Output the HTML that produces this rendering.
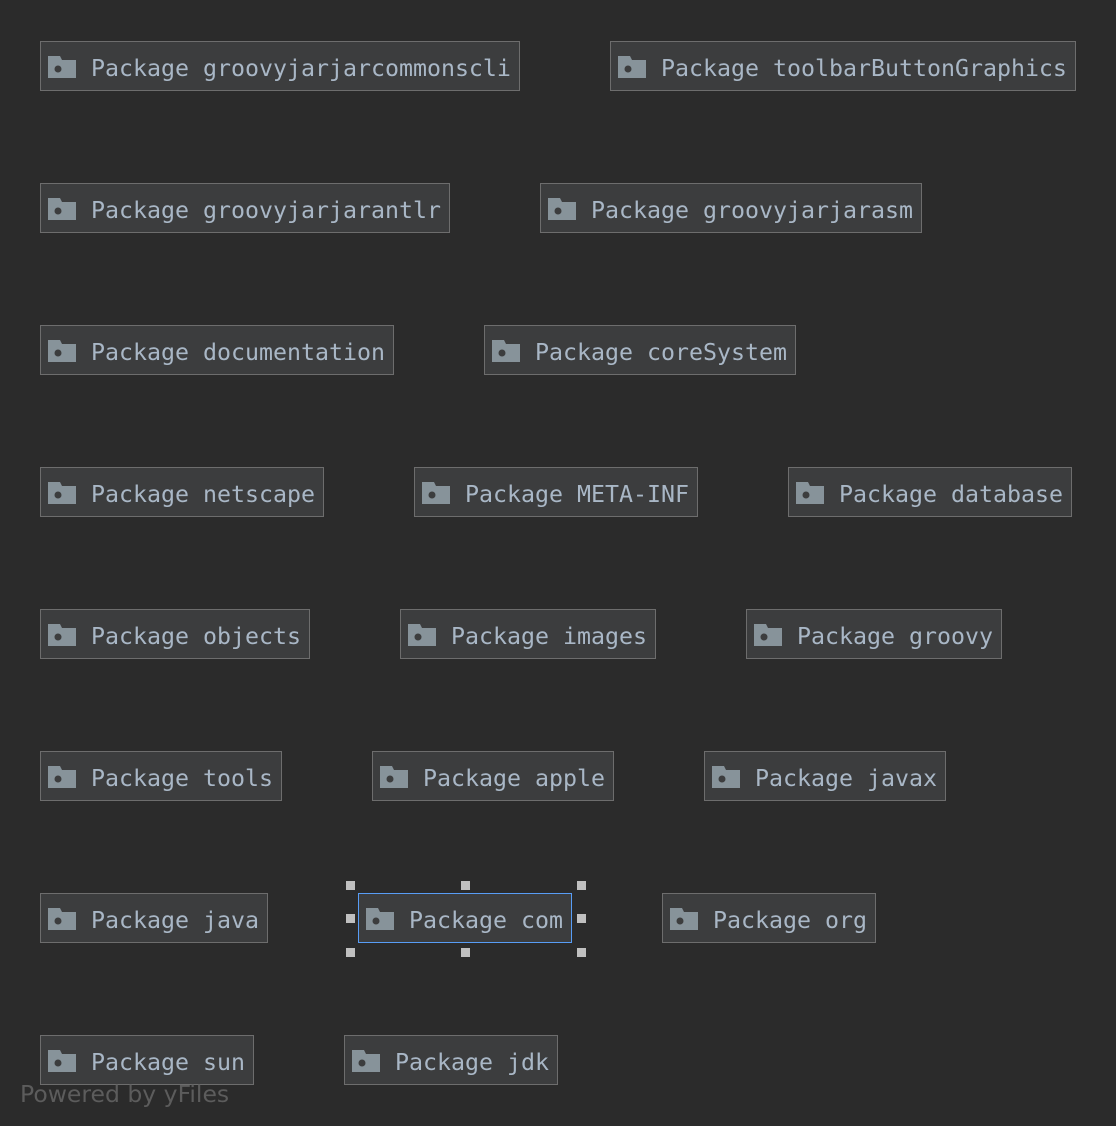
<!DOCTYPE html>
<html><head><meta charset="utf-8">
<style>
html,body{margin:0;padding:0;}
body{width:1116px;height:1126px;background:#2b2b2b;position:relative;overflow:hidden;}
.b{position:absolute;height:48px;background:#3c3d3e;border:1px solid #6d6d6d;box-sizing:content-box;}
.b svg{position:absolute;left:7px;top:14px;}
.b span{position:absolute;left:50px;top:2px;line-height:50px;font-family:"DejaVu Sans Mono","Liberation Mono",monospace;font-size:23.25px;color:#a9b7c6;white-space:pre;}
.sel{border-color:#589df6;}
.h{position:absolute;width:9px;height:9px;background:#c0c0c0;}
.pw{position:absolute;left:20px;top:1080px;font-family:"DejaVu Sans","Liberation Sans",sans-serif;font-size:23.5px;color:#5c5c5c;}
</style></head><body>
<svg width="0" height="0" style="position:absolute"><defs><symbol id="f" viewBox="0 0 28 22"><path d="M0 0H12L14 4H28V22H0Z" fill="#87939a"/><circle cx="10" cy="13" r="3.5" fill="#3c3d3e"/></symbol></defs></svg>

<div class="b" style="left:40px;top:41px;width:478px"><svg width="28" height="22"><use href="#f"/></svg><span>Package groovyjarjarcommonscli</span></div>
<div class="b" style="left:610px;top:41px;width:464px"><svg width="28" height="22"><use href="#f"/></svg><span>Package toolbarButtonGraphics</span></div>

<div class="b" style="left:40px;top:183px;width:408px"><svg width="28" height="22"><use href="#f"/></svg><span>Package groovyjarjarantlr</span></div>
<div class="b" style="left:540px;top:183px;width:380px"><svg width="28" height="22"><use href="#f"/></svg><span>Package groovyjarjarasm</span></div>

<div class="b" style="left:40px;top:325px;width:352px"><svg width="28" height="22"><use href="#f"/></svg><span>Package documentation</span></div>
<div class="b" style="left:484px;top:325px;width:310px"><svg width="28" height="22"><use href="#f"/></svg><span>Package coreSystem</span></div>

<div class="b" style="left:40px;top:467px;width:282px"><svg width="28" height="22"><use href="#f"/></svg><span>Package netscape</span></div>
<div class="b" style="left:414px;top:467px;width:282px"><svg width="28" height="22"><use href="#f"/></svg><span>Package META-INF</span></div>
<div class="b" style="left:788px;top:467px;width:282px"><svg width="28" height="22"><use href="#f"/></svg><span>Package database</span></div>

<div class="b" style="left:40px;top:609px;width:268px"><svg width="28" height="22"><use href="#f"/></svg><span>Package objects</span></div>
<div class="b" style="left:400px;top:609px;width:254px"><svg width="28" height="22"><use href="#f"/></svg><span>Package images</span></div>
<div class="b" style="left:746px;top:609px;width:254px"><svg width="28" height="22"><use href="#f"/></svg><span>Package groovy</span></div>

<div class="b" style="left:40px;top:751px;width:240px"><svg width="28" height="22"><use href="#f"/></svg><span>Package tools</span></div>
<div class="b" style="left:372px;top:751px;width:240px"><svg width="28" height="22"><use href="#f"/></svg><span>Package apple</span></div>
<div class="b" style="left:704px;top:751px;width:240px"><svg width="28" height="22"><use href="#f"/></svg><span>Package javax</span></div>

<div class="b" style="left:40px;top:893px;width:226px"><svg width="28" height="22"><use href="#f"/></svg><span>Package java</span></div>
<div class="b sel" style="left:358px;top:893px;width:212px"><svg width="28" height="22"><use href="#f"/></svg><span>Package com</span></div>
<div class="b" style="left:662px;top:893px;width:212px"><svg width="28" height="22"><use href="#f"/></svg><span>Package org</span></div>

<div class="h" style="left:346px;top:881px"></div>
<div class="h" style="left:461px;top:881px"></div>
<div class="h" style="left:577px;top:881px"></div>
<div class="h" style="left:346px;top:914px"></div>
<div class="h" style="left:577px;top:914px"></div>
<div class="h" style="left:346px;top:948px"></div>
<div class="h" style="left:461px;top:948px"></div>
<div class="h" style="left:577px;top:948px"></div>

<div class="b" style="left:40px;top:1035px;width:212px"><svg width="28" height="22"><use href="#f"/></svg><span>Package sun</span></div>
<div class="b" style="left:344px;top:1035px;width:212px"><svg width="28" height="22"><use href="#f"/></svg><span>Package jdk</span></div>

<div class="pw">Powered by yFiles</div>
</body></html>
